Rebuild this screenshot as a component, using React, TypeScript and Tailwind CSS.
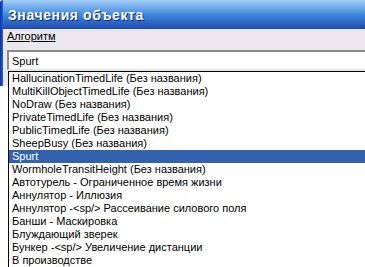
import React from "react";

const items = [
  "HallucinationTimedLife (Без названия)",
  "MultiKillObjectTimedLife (Без названия)",
  "NoDraw (Без названия)",
  "PrivateTimedLife (Без названия)",
  "PublicTimedLife (Без названия)",
  "SheepBusy (Без названия)",
  "Spurt",
  "WormholeTransitHeight (Без названия)",
  "Автотурель - Ограниченное время жизни",
  "Аннулятор - Иллюзия",
  "Аннулятор -<sp/> Рассеивание силового поля",
  "Банши - Маскировка",
  "Блуждающий зверек",
  "Бункер -<sp/> Увеличение дистанции",
  "В производстве",
];

const selected = "Spurt";

export default function App() {
  return (
    <div className="relative w-[365px] h-[267px] overflow-hidden bg-white font-['Liberation_Sans',Arial,sans-serif] text-[11px] text-black">
      {/* dialog window */}
      <div className="flex h-[86px] w-[380px]">
        <div className="w-[3px] bg-gradient-to-r from-[#0831a8] to-[#2a5fd6] rounded-tl-[4px]" />
        <div className="flex flex-1 flex-col">
          <div className="h-[29px] rounded-tr-[6px] bg-gradient-to-b from-[#a4d0f8] via-[#4189de] to-[#2149ad] pl-[5px] pt-[5px]">
            <span className="text-[14px] font-bold tracking-[0.6px] text-white [text-shadow:1px_1px_0_#0c2a78]">
              Значения объекта
            </span>
          </div>
          <div className="flex-1 bg-[#ebe8ec] pl-[4px]">
            <div className="h-[21px] pt-0 leading-[14px] underline underline-offset-[1px]">Алгоритм</div>
            <div className="h-[20px] border-t-2 border-l-2 border-[#8c8c8c] border-b border-b-[#e2e2e2] bg-white pl-[3px] pt-[4px] leading-[11px]">
              Spurt
            </div>
          </div>
        </div>
      </div>

      {/* dropdown list */}
      <div className="absolute left-[8px] top-[71px] w-[400px] border-t border-l border-black bg-white">
        {items.map((item) => (
          <div
            key={item}
            className={
              item === selected
                ? "h-[13px] bg-[#3262ad] pl-[3px] leading-[13px] text-white whitespace-nowrap"
                : "h-[13px] pl-[3px] leading-[13px] whitespace-nowrap"
            }
          >
            {item}
          </div>
        ))}
      </div>
    </div>
  );
}
